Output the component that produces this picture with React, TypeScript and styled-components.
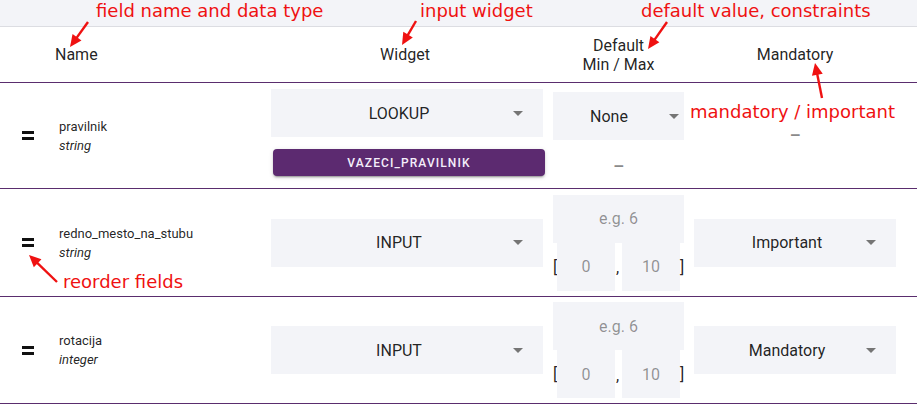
import React from "react";
import styled, { createGlobalStyle } from "styled-components";

const GlobalStyle = createGlobalStyle`
  html, body { margin: 0; padding: 0; background: #ffffff; }
  body {
    font-family: Roboto, "Noto Sans", "Liberation Sans", sans-serif;
    color: rgba(0, 0, 0, 0.87);
  }
  * { box-sizing: border-box; }
`;

const PURPLE = "#5a2d6e";
const FIELD_BG = "#f3f4f8";
const RED = "#ef1111";
const COLS = "45px 220px 284px 139px 229px";

const Page = styled.div`
  position: relative;
  width: 917px;
  height: 405px;
  overflow: hidden;
  background: #ffffff;
`;

const TopBar = styled.div`
  height: 27px;
  background: ${FIELD_BG};
  border-bottom: 1px solid #dcdde2;
`;

const HeaderRow = styled.div`
  display: grid;
  grid-template-columns: ${COLS};
  height: 56px;
  align-items: center;
  border-bottom: 1px solid ${PURPLE};
  font-size: 16px;
  line-height: 19px;
  color: rgba(0, 0, 0, 0.87);
`;

const HeaderCell = styled.div<{ $align?: "left" | "center"; $pl?: number; $pr?: number }>`
  text-align: ${(p) => p.$align ?? "center"};
  padding-left: ${(p) => p.$pl ?? 0}px;
  padding-right: ${(p) => p.$pr ?? 0}px;
`;

const FieldRow = styled.div<{ $h: number }>`
  display: grid;
  grid-template-columns: ${COLS};
  height: ${(p) => p.$h}px;
  align-items: center;
  border-bottom: 1px solid ${PURPLE};
`;

const Handle = styled.div`
  width: 12px;
  height: 9px;
  margin-left: 22px;
  border-top: 3px solid #111;
  border-bottom: 3px solid #111;
`;

const NameCell = styled.div`
  padding-left: 14px;
  font-size: 13px;
  line-height: 19px;
  color: rgba(0, 0, 0, 0.87);
`;

const FieldType = styled.div`
  font-style: italic;
`;

const Stack = styled.div<{ $pl?: number; $pr?: number; $mb?: number }>`
  display: flex;
  flex-direction: column;
  padding-left: ${(p) => p.$pl ?? 0}px;
  padding-right: ${(p) => p.$pr ?? 0}px;
  margin-bottom: ${(p) => p.$mb ?? 0}px;
`;

const SelectBox = styled.div<{ $compact?: boolean }>`
  display: flex;
  align-items: center;
  height: 48px;
  background: ${FIELD_BG};
  padding-left: ${(p) => (p.$compact ? 0 : 21)}px;
  font-size: 16px;
  color: rgba(0, 0, 0, 0.87);
`;

const SelectValue = styled.span`
  flex: 1;
  text-align: center;
`;

const Caret = styled.svg<{ $compact?: boolean }>`
  flex: none;
  width: 10px;
  height: 5px;
  margin-left: ${(p) => (p.$compact ? 4 : 7)}px;
  margin-right: ${(p) => (p.$compact ? 5 : 20)}px;
  fill: #757575;
`;

const LookupButton = styled.button`
  height: 27px;
  margin: 12px -2px 0 2px;
  border: none;
  border-radius: 4px;
  background: #5c2a70;
  color: #f4eefa;
  font-family: Roboto, "Noto Sans", sans-serif;
  font-size: 12px;
  font-weight: 500;
  letter-spacing: 1.1px;
  text-transform: uppercase;
  box-shadow: 0 3px 1px -2px rgba(0, 0, 0, 0.2), 0 2px 2px 0 rgba(0, 0, 0, 0.14),
    0 1px 5px 0 rgba(0, 0, 0, 0.12);
`;

const Empty = styled.div<{ $mt?: number }>`
  height: 24px;
  margin-top: ${(p) => p.$mt ?? 0}px;
  line-height: 24px;
  text-align: center;
  font-size: 17px;
  font-weight: 700;
  color: #8a8a8a;
`;

const TextBox = styled.div<{ $w: number }>`
  width: ${(p) => p.$w}px;
  height: 48px;
  background: ${FIELD_BG};
  display: flex;
  align-items: center;
  justify-content: center;
  font-size: 16px;
  color: rgba(0, 0, 0, 0.42);
`;

const RangeRow = styled.div`
  display: flex;
  align-items: center;
`;

const Bracket = styled.span`
  width: 4px;
  font-size: 16px;
  color: rgba(0, 0, 0, 0.87);
  overflow: visible;
  white-space: nowrap;
  margin-top: 1px;
`;

const Comma = styled.span`
  width: 7px;
  padding-left: 1px;
  font-size: 16px;
  color: rgba(0, 0, 0, 0.87);
  margin-top: 2px;
`;

const Overlay = styled.div`
  position: absolute;
  inset: 0;
  pointer-events: none;
`;

const ArrowLayer = styled.svg`
  position: absolute;
  left: 0;
  top: 0;
`;

const Note = styled.span<{ $x: number; $y: number }>`
  position: absolute;
  left: ${(p) => p.$x}px;
  top: ${(p) => p.$y}px;
  font-family: "DejaVu Sans", "Noto Sans", sans-serif;
  font-size: 18px;
  line-height: 18px;
  color: ${RED};
  white-space: nowrap;
`;

function CaretIcon({ compact }: { compact?: boolean }) {
  return (
    <Caret $compact={compact} viewBox="0 0 10 5">
      <path d="M0 0 L5 5 L10 0 Z" />
    </Caret>
  );
}

function Select({ value, compact }: { value: string; compact?: boolean }) {
  return (
    <SelectBox $compact={compact}>
      <SelectValue>{value}</SelectValue>
      <CaretIcon compact={compact} />
    </SelectBox>
  );
}

function Range() {
  return (
    <Stack>
      <TextBox $w={131}>e.g. 6</TextBox>
      <RangeRow>
        <Bracket>[</Bracket>
        <TextBox $w={58}>0</TextBox>
        <Comma>,</Comma>
        <TextBox $w={58}>10</TextBox>
        <Bracket>]</Bracket>
      </RangeRow>
    </Stack>
  );
}

type Arrow = [number, number, number, number];

const ARROWS: Arrow[] = [
  [88, 22, 70, 47],
  [416, 21, 402, 45],
  [667, 22, 648, 49],
  [822, 98, 815, 63],
  [57, 282, 29, 255],
];

function head([x1, y1, x2, y2]: Arrow, len = 12, half = 5.5) {
  const dx = x2 - x1;
  const dy = y2 - y1;
  const l = Math.hypot(dx, dy);
  const ux = dx / l;
  const uy = dy / l;
  const bx = x2 - ux * len;
  const by = y2 - uy * len;
  const px = -uy;
  const py = ux;
  return {
    points: `${x2},${y2} ${bx + px * half},${by + py * half} ${bx - px * half},${by - py * half}`,
    bx: x2 - ux * (len - 2),
    by: y2 - uy * (len - 2),
  };
}

function Annotations() {
  return (
    <Overlay>
      <ArrowLayer width={917} height={405} viewBox="0 0 917 405">
        {ARROWS.map((a, i) => {
          const h = head(a);
          return (
            <g key={i} fill={RED} stroke={RED}>
              <line x1={a[0]} y1={a[1]} x2={h.bx} y2={h.by} strokeWidth={2.4} />
              <polygon points={h.points} stroke="none" />
            </g>
          );
        })}
      </ArrowLayer>
      <Note $x={96} $y={2}>field name and data type</Note>
      <Note $x={420} $y={2}>input widget</Note>
      <Note $x={641} $y={2}>default value, constraints</Note>
      <Note $x={690} $y={103}>mandatory / important</Note>
      <Note $x={63} $y={273}>reorder fields</Note>
    </Overlay>
  );
}

export default function App() {
  return (
    <Page>
      <GlobalStyle />
      <TopBar />
      <HeaderRow>
        <HeaderCell />
        <HeaderCell $align="left" $pl={10}>Name</HeaderCell>
        <HeaderCell $pl={6} $pr={10}>Widget</HeaderCell>
        <HeaderCell>
          Default
          <br />
          Min / Max
        </HeaderCell>
        <HeaderCell $pl={6} $pr={21}>Mandatory</HeaderCell>
      </HeaderRow>

      <FieldRow $h={106}>
        <Handle />
        <NameCell>
          <div>pravilnik</div>
          <FieldType>string</FieldType>
        </NameCell>
        <Stack $pl={6} $pr={6} $mb={6}>
          <Select value="LOOKUP" />
          <LookupButton>vazeci_pravilnik</LookupButton>
        </Stack>
        <Stack $pl={4} $pr={4} $mb={1}>
          <Select value="None" compact />
          <Empty $mt={14}>–</Empty>
        </Stack>
        <Stack $pl={6} $pr={21} $mb={2}>
          <Empty>–</Empty>
        </Stack>
      </FieldRow>

      <FieldRow $h={108}>
        <Handle />
        <NameCell>
          <div>redno_mesto_na_stubu</div>
          <FieldType>string</FieldType>
        </NameCell>
        <Stack $pl={6} $pr={6}>
          <Select value="INPUT" />
        </Stack>
        <Stack $pl={4} $pr={4}>
          <Range />
        </Stack>
        <Stack $pl={6} $pr={21}>
          <Select value="Important" />
        </Stack>
      </FieldRow>

      <FieldRow $h={107}>
        <Handle />
        <NameCell>
          <div>rotacija</div>
          <FieldType>integer</FieldType>
        </NameCell>
        <Stack $pl={6} $pr={6}>
          <Select value="INPUT" />
        </Stack>
        <Stack $pl={4} $pr={4}>
          <Range />
        </Stack>
        <Stack $pl={6} $pr={21}>
          <Select value="Mandatory" />
        </Stack>
      </FieldRow>

      <Annotations />
    </Page>
  );
}
